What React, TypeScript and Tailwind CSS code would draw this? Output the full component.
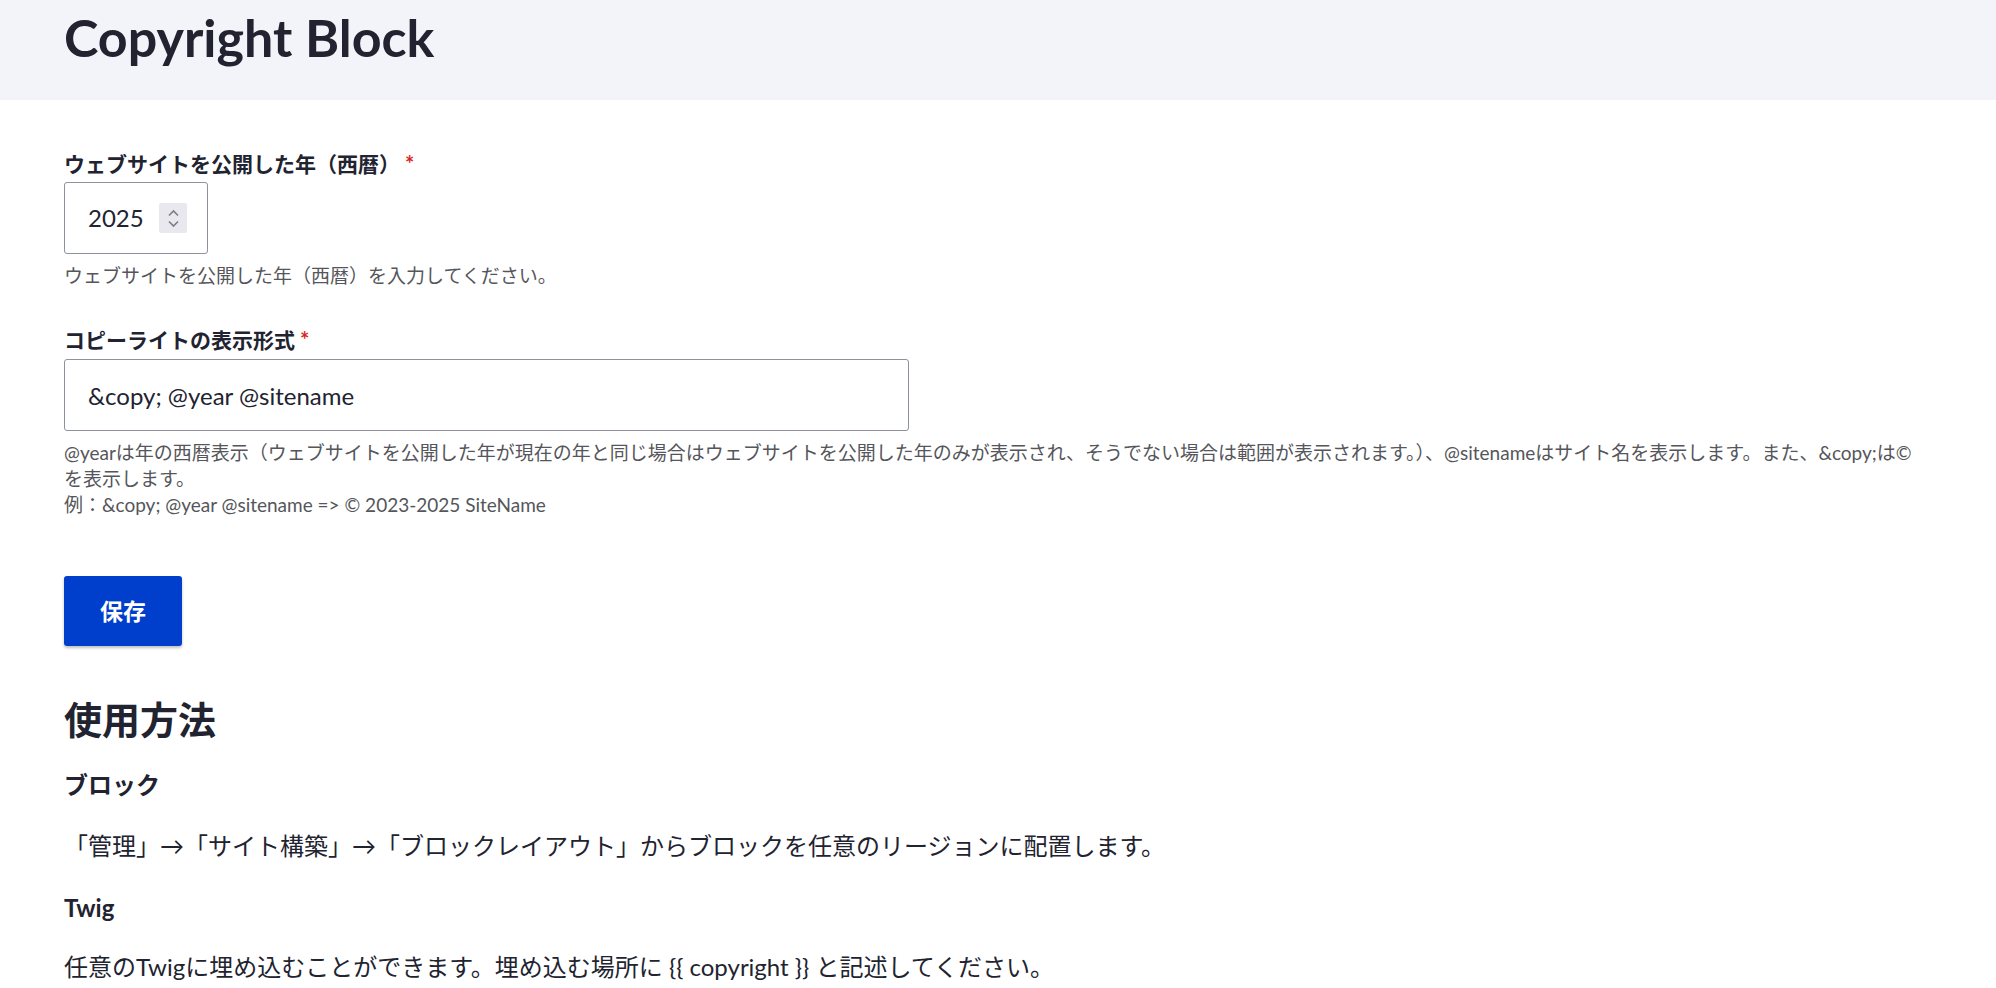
import React, { useState } from 'react';

const FONT = "font-['Lato','Noto_Sans_CJK_JP',sans-serif]";

const Required: React.FC = () => (
  <span className="ml-[5px] text-[#dc2323] text-[22px] font-bold leading-none">*</span>
);

const Spinner: React.FC = () => (
  <span className="flex flex-col items-center justify-center gap-[3px] w-[28px] h-[30px] bg-[#e8e8ee] rounded-[2px]">
    <svg width="13" height="8" viewBox="0 0 13 8" fill="none">
      <path d="M2 6.5 L6.5 2 L11 6.5" stroke="#7f7f8c" strokeWidth="1.7" />
    </svg>
    <svg width="13" height="8" viewBox="0 0 13 8" fill="none">
      <path d="M2 1.5 L6.5 6 L11 1.5" stroke="#7f7f8c" strokeWidth="1.7" />
    </svg>
  </span>
);

const App: React.FC = () => {
  const [year] = useState('2025');
  const [format, setFormat] = useState('&copy; @year @sitename');

  return (
    <div className={`min-h-screen bg-white text-[#222330] ${FONT}`}>
      <header className="bg-[#f3f4f9] h-[100px] px-16 pt-[7px]">
        <h1 className="text-[52px] font-bold leading-[60px]">Copyright Block</h1>
      </header>

      <main className="px-16 pt-[50px]">
        <div>
          <label className="block text-[21px] font-bold leading-[27px]">
            ウェブサイトを公開した年（西暦）<Required />
          </label>
          <div className="mt-[5px] flex items-center justify-between w-[144px] h-[72px] border border-[#8e929c] rounded-[3px] pl-[23px] pr-[20px] text-[24px]">
            <span>{year}</span>
            <Spinner />
          </div>
          <div className="mt-[9px] text-[19px] leading-[26px] text-[#55565b]">
            ウェブサイトを公開した年（西暦）を入力してください。
          </div>
        </div>

        <div className="mt-[37px]">
          <label className="block text-[21px] font-bold leading-[27px]">
            コピーライトの表示形式<Required />
          </label>
          <input
            type="text"
            value={format}
            onChange={e => setFormat(e.target.value)}
            className="mt-[6px] block w-[845px] h-[72px] border border-[#8e929c] rounded-[3px] px-[23px] text-[24px] text-[#222330] outline-none"
          />
          <div className="mt-[9px] text-[19px] leading-[26px] text-[#55565b] whitespace-nowrap">
            @yearは年の西暦表示（ウェブサイトを公開した年が現在の年と同じ場合はウェブサイトを公開した年のみが表示され、そうでない場合は範囲が表示されます。）、@sitenameはサイト名を表示します。また、&amp;copy;は©
            <br />
            を表示します。
            <br />
            例：&amp;copy; @year @sitename =&gt; © 2023-2025 SiteName
          </div>
        </div>

        <button className="mt-[58px] h-[70px] px-[36px] bg-[#003ecc] text-white text-[23px] font-bold rounded-[3px] shadow-[0_2px_3px_rgba(0,0,0,0.25)]">
          保存
        </button>

        <h2 className="mt-[50px] text-[38px] font-bold leading-[46px]">使用方法</h2>
        <h3 className="mt-[28px] text-[24px] font-bold leading-[30px]">ブロック</h3>
        <p className="mt-[28px] text-[24px] leading-[36px]">
          「管理」→「サイト構築」→「ブロックレイアウト」からブロックを任意のリージョンに配置します。
        </p>
        <h3 className="mt-[29px] text-[24px] font-bold leading-[30px]">Twig</h3>
        <p className="mt-[26px] text-[24px] leading-[36px]">
          任意のTwigに埋め込むことができます。埋め込む場所に {'{{ copyright }}'} と記述してください。
        </p>
      </main>
    </div>
  );
};

export default App;
